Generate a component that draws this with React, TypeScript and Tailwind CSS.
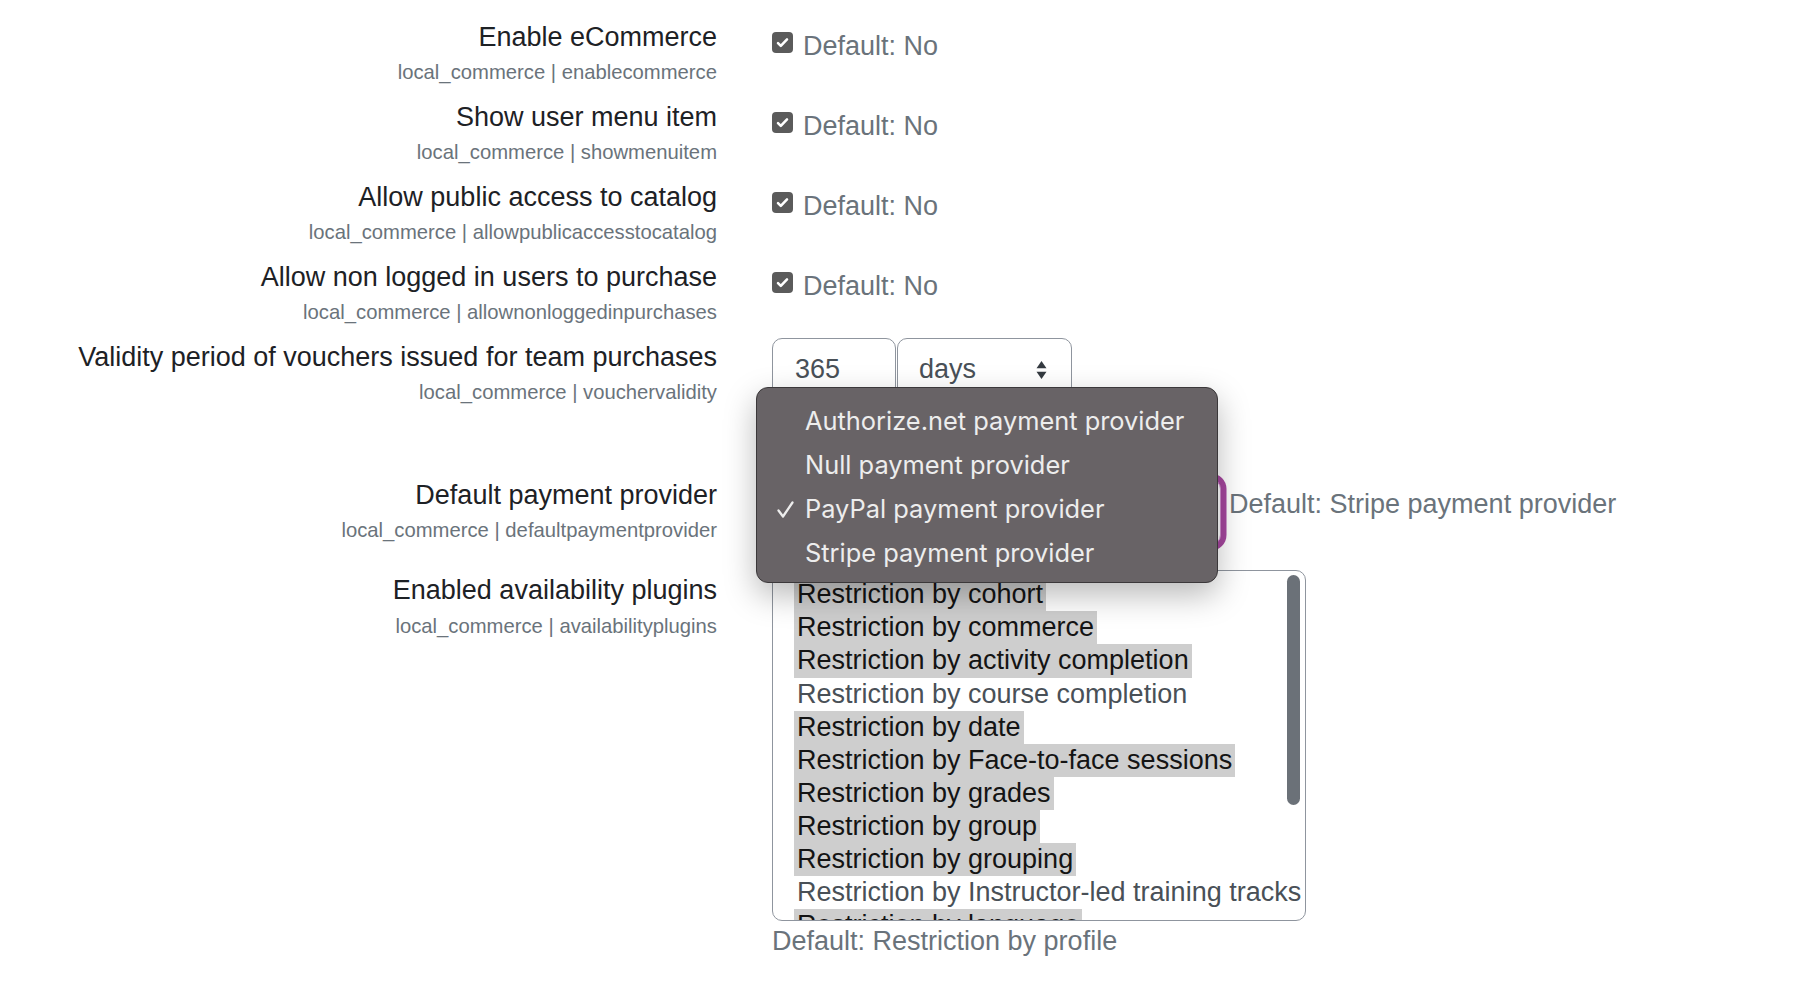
import React from "react";

const plugins: [string, boolean][] = [
  ["Restriction by cohort", true],
  ["Restriction by commerce", true],
  ["Restriction by activity completion", true],
  ["Restriction by course completion", false],
  ["Restriction by date", true],
  ["Restriction by Face-to-face sessions", true],
  ["Restriction by grades", true],
  ["Restriction by group", true],
  ["Restriction by grouping", true],
  ["Restriction by Instructor-led training tracks", false],
  ["Restriction by language", true],
  ["Restriction by profile", true],
];

function CheckBox() {
  return (
    <span className="mt-[6.5px] inline-flex h-[21px] w-[21px] shrink-0 items-center justify-center rounded-[4px] bg-[#5b5b5b]">
      <svg viewBox="0 0 16 16" className="h-[15px] w-[15px]">
        <path d="M3.2 8.6l3 3 6.6-7" fill="none" stroke="white" strokeWidth="2.7" strokeLinecap="round" strokeLinejoin="round" />
      </svg>
    </span>
  );
}

function Label({ title, name }: { title: string; name: string }) {
  return (
    <div className="w-[717px] shrink-0 text-right">
      <div className="text-[27px] leading-[40.5px] text-[#1d2125]">{title}</div>
      <div className="text-[20.25px] leading-[30.5px] text-[#6a737b]">local_commerce | {name}</div>
    </div>
  );
}

function CheckRow({ title, name }: { title: string; name: string }) {
  return (
    <div className="flex items-start pb-[9px]">
      <Label title={title} name={name} />
      <div className="ml-[55px] flex items-start pt-[9px]">
        <CheckBox />
        <span className="ml-[10px] text-[27px] leading-[40.5px] text-[#6a737b]">Default: No</span>
      </div>
    </div>
  );
}

const menuItems = [
  "Authorize.net payment provider",
  "Null payment provider",
  "PayPal payment provider",
  "Stripe payment provider",
];

export default function App() {
  return (
    <div className="relative min-h-[990px] w-full overflow-hidden bg-white pt-[16.5px] font-['Liberation_Sans',Arial,sans-serif]">
      <CheckRow title="Enable eCommerce" name="enablecommerce" />
      <CheckRow title="Show user menu item" name="showmenuitem" />
      <CheckRow title="Allow public access to catalog" name="allowpublicaccesstocatalog" />
      <CheckRow title="Allow non logged in users to purchase" name="allownonloggedinpurchases" />

      {/* Validity period */}
      <div className="flex items-start pb-[67.3px]">
        <Label title="Validity period of vouchers issued for team purchases" name="vouchervalidity" />
        <div className="ml-[55px] flex items-start pt-[1px]">
          <div className="h-[66px] w-[124px] rounded-[10px] border border-[#8f959e] pl-[22px] pt-[10.5px] text-[27px] leading-[40.5px] text-[#495057]">
            365
          </div>
          <div className="ml-[1px] flex h-[66px] w-[175px] items-start justify-between rounded-[10px] border border-[#8f959e] pl-[21px] pr-[24px] pt-[10.5px] text-[27px] leading-[40.5px] text-[#495057]">
            <span>days</span>
            <svg viewBox="0 0 11 20" className="mt-[11px] h-[20px] w-[11px]">
              <path d="M0.5 8.3L5.5 1L10.5 8.3Z" fill="#343a40" />
              <path d="M0.5 11.7L5.5 19L10.5 11.7Z" fill="#343a40" />
            </svg>
          </div>
        </div>
      </div>

      {/* Default payment provider */}
      <div className="flex items-start pb-[24.5px]">
        <Label title="Default payment provider" name="defaultpaymentprovider" />
        <div className="ml-[55px] flex items-start pt-[4.3px]">
          <div className="h-[66px] w-[449px] rounded-[10px] border border-[#d08ccd] bg-white pl-[23px] pt-[9px] text-[27px] leading-[40.5px] text-[#495057] shadow-[0_0_0_5.5px_#a6479f]">
            PayPal payment provider
          </div>
          <span className="ml-[8px] mt-[5px] whitespace-nowrap text-[27px] leading-[40.5px] text-[#6a737b]">
            Default: Stripe payment provider
          </span>
        </div>
      </div>

      {/* Enabled availability plugins */}
      <div className="flex items-start">
        <Label title="Enabled availability plugins" name="availabilityplugins" />
        <div className="ml-[55px] flex flex-col">
          <div className="relative h-[351px] w-[534px] overflow-hidden rounded-[10px] border border-[#8f959e] pl-[21px] pt-[7px] text-[27px]">
            {plugins.map(([t, sel]) => (
              <div key={t} className="h-[33.1px] whitespace-nowrap leading-[33.1px]">
                <span
                  className={
                    sel
                      ? "inline-block bg-[#cecece] px-[3px] text-[#141414]"
                      : "inline-block px-[3px] text-[#495057]"
                  }
                >
                  {t}
                </span>
              </div>
            ))}
            <div className="absolute right-[5px] top-[4px] h-[230px] w-[13px] rounded-full bg-[#6b7178]" />
          </div>
          <div className="text-[27px] leading-[40.5px] text-[#6a737b]">Default: Restriction by profile</div>
        </div>
      </div>

      {/* Native dropdown menu overlay */}
      <div className="absolute left-[756px] top-[387px] h-[196px] w-[462px] rounded-[12px] border border-[#3b383a] bg-[#686366] pb-[8px] pt-[11px] font-['Inter',sans-serif] text-[25.4px] text-[#ededed] shadow-[0_12px_32px_rgba(0,0,0,0.28)]">
        {menuItems.map((m) => (
          <div key={m} className="relative h-[44px] whitespace-nowrap pl-[48px] leading-[44px]">
            {m === "PayPal payment provider" && (
              <svg viewBox="0 0 17 17" className="absolute left-[20px] top-[14px] h-[17px] w-[17px]">
                <path d="M1.5 9.5L6 15.5L15.5 1.5" fill="none" stroke="#ededed" strokeWidth="2.3" strokeLinecap="round" strokeLinejoin="round" />
              </svg>
            )}
            {m}
          </div>
        ))}
      </div>
    </div>
  );
}
